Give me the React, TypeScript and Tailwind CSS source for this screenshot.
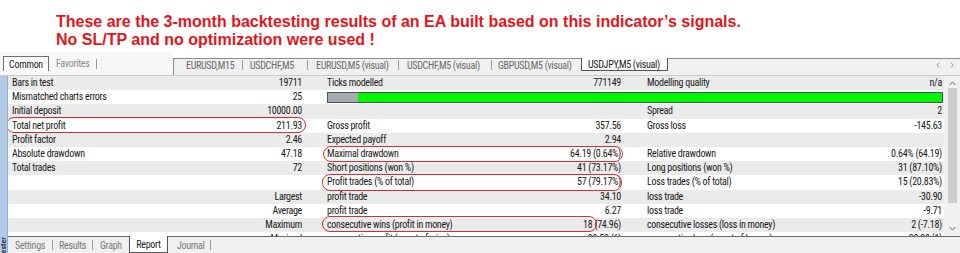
type Cell = [string, string];
type Row = { c: Cell[]; bar?: boolean };

const rows: Row[] = [
  { c: [["Bars in test", "19711"], ["Ticks modelled", "771149"], ["Modelling quality", "n/a"]] },
  { c: [["Mismatched charts errors", "25"]], bar: true },
  { c: [["Initial deposit", "10000.00"], ["", ""], ["Spread", "2"]] },
  { c: [["Total net profit", "211.93"], ["Gross profit", "357.56"], ["Gross loss", "-145.63"]] },
  { c: [["Profit factor", "2.46"], ["Expected payoff", "2.94"], ["", ""]] },
  { c: [["Absolute drawdown", "47.18"], ["Maximal drawdown", "64.19 (0.64%)"], ["Relative drawdown", "0.64% (64.19)"]] },
  { c: [["Total trades", "72"], ["Short positions (won %)", "41 (73.17%)"], ["Long positions (won %)", "31 (87.10%)"]] },
  { c: [["", ""], ["Profit trades (% of total)", "57 (79.17%)"], ["Loss trades (% of total)", "15 (20.83%)"]] },
  { c: [["", "Largest"], ["profit trade", "34.10"], ["loss trade", "-30.90"]] },
  { c: [["", "Average"], ["profit trade", "6.27"], ["loss trade", "-9.71"]] },
  { c: [["", "Maximum"], ["consecutive wins (profit in money)", "18 (74.96)"], ["consecutive losses (loss in money)", "2 (-7.18)"]] },
  { c: [["", "Maximal"], ["consecutive profit (count of wins)", "99.53 (6)"], ["consecutive loss (count of losses)", "-30.90 (1)"]] },
];

const pads = ["pl-[4px] pr-[18px]", "pl-[7px] pr-[19px]", "pl-[7px] pr-[2px]"];

function Sep() {
  return <span className="h-[10px] w-px bg-[#9a9a9a]" />;
}

export default function App() {
  return (
    <div
      className="w-[960px] h-[253px] overflow-hidden bg-white text-[10px] tracking-[-0.3px] text-[#1a1a1a] flex flex-col"
      style={{ fontFamily: "'Roboto Condensed', 'Liberation Sans', sans-serif" }}
    >
      {/* red caption */}
      <div
        className="h-[52px] shrink-0 pl-[56px] pt-[13px] text-[16px] leading-[18px] font-bold tracking-normal text-[#e5141b]"
        style={{ fontFamily: "'Liberation Sans', Arial, sans-serif" }}
      >
        <div>These are the 3-month backtesting results of an EA built based on this indicator’s signals.</div>
        <div>No SL/TP and no optimization were used !</div>
      </div>

      {/* tab row */}
      <div className="h-[24px] shrink-0 flex border-b border-[#c8c8c8]">
        <div className="w-[173px] shrink-0 flex items-start pl-[3px] pt-[4px] bg-[#f7f7f7]">
          <div className="h-[15px] w-[46px] flex items-center justify-center border-x border-t border-[#6e6e6e] bg-white text-[#222]">
            Common
          </div>
          <div className="h-[15px] flex items-center">
            <span className="pl-[7px] w-[47px] text-[#8c8c8c]">Favorites</span>
            <Sep />
          </div>
        </div>
        <div className="flex-1 mt-[6px] border-t border-l border-[#8c8c8c] bg-[#f0f0f0] flex items-start text-[#6a6a6a]">
          <div className="h-[12px] flex items-center">
            <span className="w-[68px] pl-[12px]">EURUSD,M15</span>
            <Sep />
            <span className="w-[64px] pl-[7px]">USDCHF,M5</span>
            <Sep />
            <span className="w-[90px] pl-[8px]">EURUSD,M5 (visual)</span>
            <Sep />
            <span className="w-[92px] pl-[8px]">USDCHF,M5 (visual)</span>
            <Sep />
            <span className="w-[89px] pl-[6px]">GBPUSD,M5 (visual)</span>
          </div>
          <div className="h-[13px] w-[87px] -mt-px flex items-center pl-[6px] bg-white border-x border-b border-[#555] text-[#222]">
            USDJPY,M5 (visual)
          </div>
          <div className="ml-auto mr-[6px] h-[12px] flex items-center gap-[10px] text-[#9a9a9a]">
            <svg width="4" height="6" viewBox="0 0 4 6"><path d="M3 0.5L1 3l2 2.5" fill="none" stroke="#9a9a9a" strokeWidth="1" /></svg>
            <svg width="4" height="6" viewBox="0 0 4 6"><path d="M1 0.5L3 3l-2 2.5" fill="none" stroke="#9a9a9a" strokeWidth="1" /></svg>
          </div>
        </div>
      </div>

      {/* main */}
      <div className="flex-1 flex min-h-0">
        {/* left blue title strip */}
        <div className="w-[8px] shrink-0 bg-[#b3cae6] border-r border-[#8fb0d8] flex flex-col justify-end items-center overflow-hidden">
          <span className="[writing-mode:vertical-rl] rotate-180 text-[8px] leading-[8px] font-bold text-[#2a3a55] tracking-normal mb-[-4px]">
            Tester
          </span>
        </div>

        <div className="flex-1 flex flex-col min-w-0">
          <div className="relative h-[160px] shrink-0 flex overflow-hidden">
            {/* table */}
            <div className="w-[936px] shrink-0 flex flex-col">
              {rows.map((r, i) => (
                <div
                  key={i}
                  className={`h-[14.2px] shrink-0 grid grid-cols-[312px_320px_304px] ${i % 2 === 0 ? "bg-[#ebebeb]" : "bg-white"}`}
                >
                  {r.c.map((cell, j) => (
                    <div key={j} className={`flex items-center justify-between leading-[14px] whitespace-nowrap ${pads[j]}`}>
                      <span>{cell[0]}</span>
                      <span>{cell[1]}</span>
                    </div>
                  ))}
                  {r.bar && (
                    <div className="col-span-2 flex items-center pl-[7px] pr-[1px]">
                      <div className="h-[11px] w-full flex border border-[#3d5a5a] bg-[#00f700]">
                        <div className="w-[30px] h-full bg-[#a9a9b1]" />
                      </div>
                    </div>
                  )}
                </div>
              ))}
            </div>

            {/* scrollbar */}
            <div className="w-[16px] shrink-0 bg-[#f0f0f0] flex flex-col items-center">
              <svg className="mt-[5px]" width="7" height="5" viewBox="0 0 7 5"><path d="M0.5 4L3.5 1l3 3" fill="none" stroke="#606060" strokeWidth="1" /></svg>
              <div className="mt-[2px] w-[9px] h-[115px] bg-[#cdcdcd]" />
              <div className="flex-1" />
              <svg className="mb-[5px]" width="7" height="5" viewBox="0 0 7 5"><path d="M0.5 1L3.5 4l3-3" fill="none" stroke="#606060" strokeWidth="1" /></svg>
            </div>

            {/* red highlight rings */}
            <div className="absolute left-[-2px] top-[41px] w-[300px] h-[16px] rounded-[8px] border-[1.5px] border-[#dc2a33]" />
            <div className="absolute left-[315px] top-[70px] w-[300px] h-[16px] rounded-[8px] border-[1.5px] border-[#dc2a33]" />
            <div className="absolute left-[314px] top-[98px] w-[300px] h-[17px] rounded-[8px] border-[1.5px] border-[#dc2a33]" />
            <div className="absolute left-[314px] top-[140px] w-[275px] h-[16px] rounded-[8px] border-[1.5px] border-[#dc2a33]" />
          </div>

          {/* bottom tabs */}
          <div className="flex-1 border-t border-[#6a6a6a] bg-[#f0f0f0] flex items-start text-[#7a7a7a]">
            <div className="h-[16px] flex items-center">
              <span className="w-[44px] pl-[7px]">Settings</span>
              <Sep />
              <span className="w-[39px] pl-[6px]">Results</span>
              <Sep />
              <span className="w-[36px] pl-[7px]">Graph</span>
            </div>
            <div className="h-[17px] -mt-px w-[39px] flex items-center justify-center bg-white border-x border-b border-[#555] text-[#222]">
              Report
            </div>
            <div className="h-[16px] flex items-center">
              <span className="w-[42px] pl-[9px]">Journal</span>
              <Sep />
            </div>
          </div>
        </div>
      </div>
    </div>
  );
}
